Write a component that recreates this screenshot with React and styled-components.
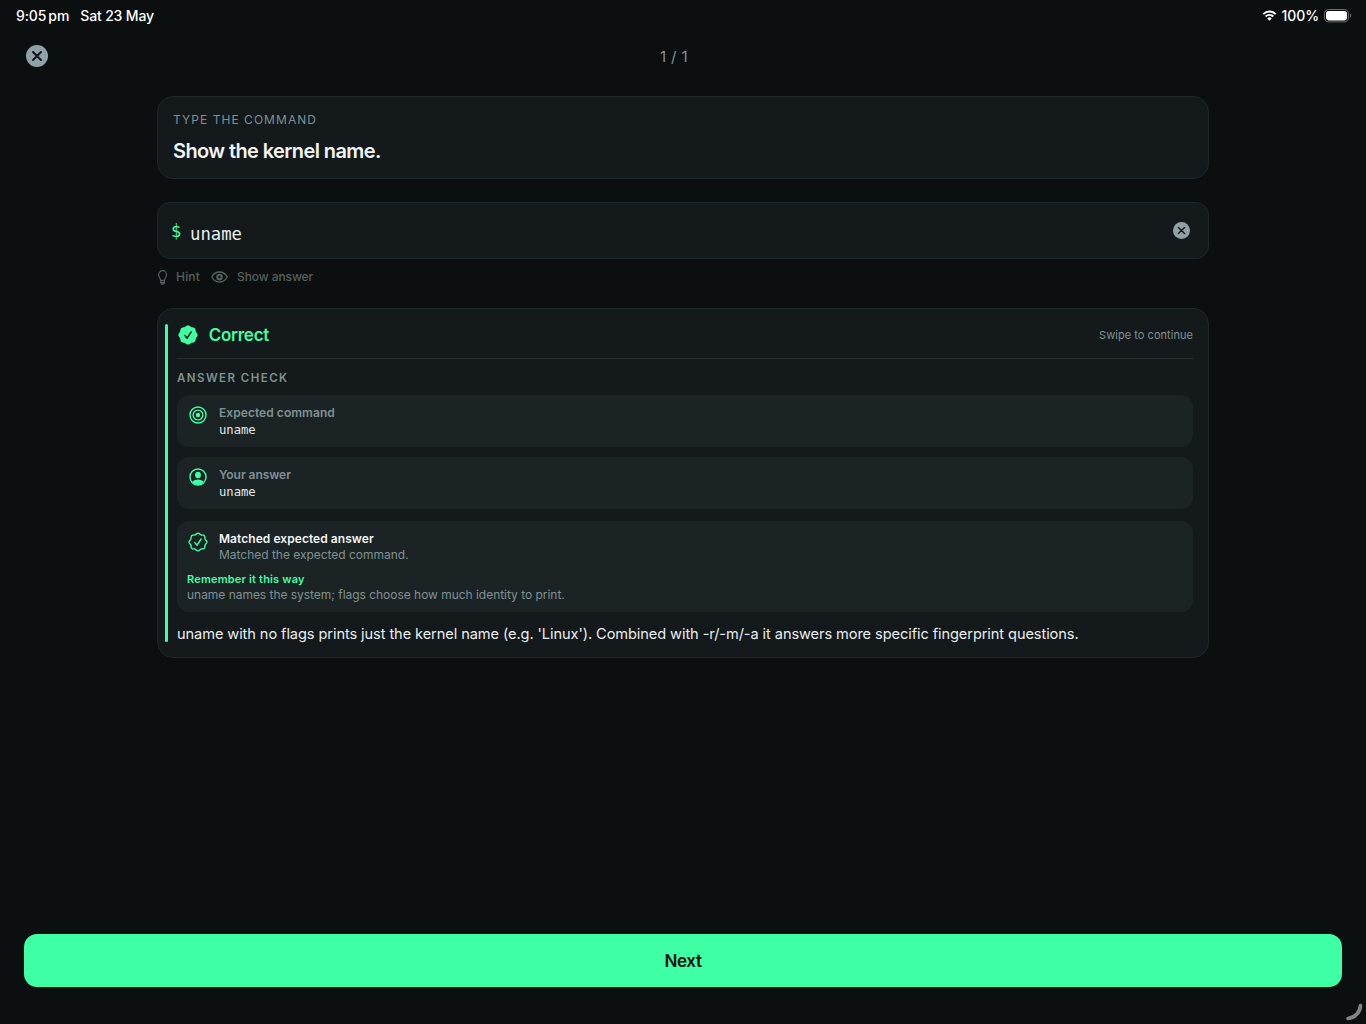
import React from 'react'
import styled, { createGlobalStyle } from 'styled-components';

const green = '#3effa3';
const muted = '#7f9292';

// wavy eight-lobed outline around 0,0
const sealPath = (radius, depth) => {
    const points = [];
    for (let i = 0; i < 128; i++) {
        const angle = (i / 128) * Math.PI * 2;
        const r = radius + depth * Math.cos(angle * 8);
        points.push(`${(r * Math.cos(angle)).toFixed(2)} ${(r * Math.sin(angle)).toFixed(2)}`);
    }
    return `M${points.join('L')}Z`;
}

function CloseIcon({ size }) {
    return (
        <svg width={size} height={size} viewBox="0 0 22 22">
            <circle cx="11" cy="11" r="11" fill="#91a2a6" />
            <path d="M7 7l8 8M15 7l-8 8" stroke="#0c1011" strokeWidth="1.9" strokeLinecap="round" />
        </svg>
    )
}

function WifiIcon() {
    return (
        <svg width="15" height="11" viewBox="0 0 16 12" fill="none" stroke="#fff" strokeWidth="2">
            <path d="M1.2 4.4a9.7 9.7 0 0 1 13.6 0" />
            <path d="M3.8 7.1a6 6 0 0 1 8.4 0" />
            <path d="M8 11.6L5.6 9.2a3.4 3.4 0 0 1 4.8 0z" fill="#fff" stroke="none" />
        </svg>
    )
}

function BatteryIcon() {
    return (
        <svg width="28" height="14" viewBox="0 0 28 14">
            <rect x="0.5" y="0.5" width="24" height="12.4" rx="4.2" fill="none" stroke="#6b6e6f" />
            <rect x="2" y="2" width="21" height="9.4" rx="2.8" fill="#fff" />
            <path d="M26 4.6c1.7.6 1.7 3.6 0 4.2z" fill="#6b6e6f" />
        </svg>
    )
}

function BulbIcon() {
    return (
        <svg width="11" height="15" viewBox="0 0 11 15" fill="none" stroke="#56605f" strokeWidth="1.2" strokeLinecap="round" strokeLinejoin="round">
            <path d="M3.7 10.4C3.6 8.4 1.7 7.2 1.7 4.6a3.9 3.9 0 0 1 7.8 0c0 2.6-1.9 3.8-2 5.8z" />
            <path d="M3.8 10.4v2.4c0 .9.7 1.400 1.800 1.400s1.800-.5 1.800-1.400v-2.400M3.900 12.300h3.400" />
        </svg>
    )
}

function EyeIcon() {
    return (
        <svg width="17" height="12" viewBox="0 0 17 12" fill="none" stroke="#56605f" strokeWidth="1.3">
            <path d="M.8 6C2.2 3.3 5 1 8.5 1S14.8 3.3 16.2 6C14.8 8.7 12 11 8.5 11S2.2 8.7.8 6z" />
            <circle cx="8.5" cy="6" r="2.3" strokeWidth="2.1" />
        </svg>
    )
}

function SealFilledIcon() {
    return (
        <svg width="20" height="20" viewBox="-10 -10 20 20">
            <path d={sealPath(9.1, 0.5)} fill={green} />
            <path d="M-3.1 .6l2.2 2.6 4-6.2" fill="none" stroke="#14191b" strokeWidth="1.5" strokeLinecap="round" strokeLinejoin="round" />
        </svg>
    )
}

function SealIcon() {
    return (
        <svg width="20" height="20" viewBox="-10 -10 20 20" fill="none" stroke={green} strokeWidth="1.4" strokeLinecap="round" strokeLinejoin="round">
            <path d={sealPath(8.3, 0.6)} />
            <path d="M-3.1 .6l2.2 2.6 4-6.2" />
        </svg>
    )
}

function TargetIcon() {
    return (
        <svg width="18" height="18" viewBox="0 0 18 18" fill="none" stroke={green} strokeWidth="1.4">
            <circle cx="9" cy="9" r="8" />
            <circle cx="9" cy="9" r="4.9" />
            <circle cx="9" cy="9" r="2.2" fill={green} stroke="none" />
        </svg>
    )
}

function PersonIcon() {
    return (
        <svg width="18" height="18" viewBox="0 0 18 18">
            <circle cx="9" cy="9" r="8" fill="none" stroke={green} strokeWidth="1.4" />
            <ellipse cx="9" cy="7" rx="2.9" ry="3.2" fill={green} />
            <path d="M3.2 14.2C4.2 12.5 6.4 11.6 9 11.6s4.8.9 5.8 2.6A8 8 0 0 1 3.2 14.2z" fill={green} />
        </svg>
    )
}

function App() {
    return (
        <Screen>
            <GlobalStyle />
            <StatusBar>
                <StatusGroup $gap="11px">
                    <Text $size={14} $weight={500} $track={-0.1}>9:05<Meridiem>pm</Meridiem></Text>
                    <Text $size={14} $weight={500} $track={-0.15}>Sat 23 May</Text>
                </StatusGroup>
                <StatusGroup $gap="5px">
                    <WifiIcon />
                    <Text $size={14} $weight={500} $track={-0.1}>100%</Text>
                    <BatteryIcon />
                </StatusGroup>
            </StatusBar>
            <Toolbar>
                <IconButton><CloseIcon size={22} /></IconButton>
                <Counter $size={15} $color={muted} $track={0.4}>1 / 1</Counter>
            </Toolbar>
            <Content>
                <Prompt>
                    <Text $size={12} $line={16} $color={muted} $track={1.05}>TYPE THE COMMAND</Text>
                    <Text as="h1" $size={20} $line={26} $weight={600} $color="#f1f5f5" $track={-0.6}>Show the kernel name.</Text>
                </Prompt>
                <CommandField>
                    <Dollar $size={17} $color={green}>$</Dollar>
                    <Command $size={17.3} $color="#e9eeee">uname</Command>
                    <IconButton><CloseIcon size={17} /></IconButton>
                </CommandField>
                <Helpers>
                    <BulbIcon />
                    <Text $size={12} $weight={500} $color="#56605f" $track={0.2}>Hint</Text>
                    <EyeIcon />
                    <Text $size={12} $weight={500} $color="#56605f" $track={-0.1}>Show answer</Text>
                </Helpers>
                <Result>
                    <Accent />
                    <ResultBody>
                        <ResultHeader>
                            <SealFilledIcon />
                            <Text as="h2" $size={17} $weight={600} $color={green} $track={-0.25}>Correct</Text>
                            <Swipe $size={11} $color={muted} $track={0.04}>Swipe to continue</Swipe>
                        </ResultHeader>
                        <SectionTitle $size={11.5} $line={15} $weight={600} $color={muted} $track={1.45}>ANSWER CHECK</SectionTitle>
                        <Row>
                            <TargetIcon />
                            <div>
                                <Text $size={12} $line={16} $weight={600} $color={muted} $track={0.05}>Expected command</Text>
                                <Mono $size={12.2} $line={19} $color="#e3e8e8">uname</Mono>
                            </div>
                        </Row>
                        <Row>
                            <PersonIcon />
                            <div>
                                <Text $size={12} $line={16} $weight={600} $color={muted} $track={-0.05}>Your answer</Text>
                                <Mono $size={12.2} $line={19} $color="#e3e8e8">uname</Mono>
                            </div>
                        </Row>
                        <Feedback>
                            <Match>
                                <SealIcon />
                                <div>
                                    <Text $size={12} $line={17} $weight={600} $color="#f1f5f5" $track={0.05}>Matched expected answer</Text>
                                    <Text $size={12} $line={16} $color={muted} $track={-0.02}>Matched the expected command.</Text>
                                </div>
                            </Match>
                            <Text $size={11} $line={16} $weight={600} $color={green} $track={0.18}>Remember it this way</Text>
                            <Text $size={12} $line={16} $color={muted} $track={-0.03}>uname names the system; flags choose how much identity to print.</Text>
                        </Feedback>
                        <Text $size={14.6} $line={20} $color="#e9eeee" $track={-0.087}>uname with no flags prints just the kernel name (e.g. 'Linux'). Combined with -r/-m/-a it answers more specific fingerprint questions.</Text>
                    </ResultBody>
                </Result>
            </Content>
            <NextButton>Next</NextButton>
            <Corner width="18" height="18" viewBox="0 0 18 18">
                <path d="M15.5 2.5C15 9.5 10 14.8 3 15.5" fill="none" stroke="#858585" strokeWidth="3.6" strokeLinecap="round" />
            </Corner>
        </Screen>
    )
}

const GlobalStyle = createGlobalStyle`
    * {
        box-sizing: border-box;
    }
    body {
        margin: 0;
        background: #0b0f10;
        font-family: Inter, "Liberation Sans", sans-serif;
    }
    svg {
        display: block;
        flex-shrink: 0;
    }
`
const Screen = styled.div`
    position: relative;
    display: flex;
    flex-direction: column;
    width: 1366px;
    height: 1024px;
    overflow: hidden;
    background: #0b0f10;
`
const Text = styled.p`
    margin: 0;
    font-size: ${({ $size }) => $size}px;
    line-height: ${({ $line }) => ($line ? `${$line}px` : '1.2')};
    font-weight: ${({ $weight }) => $weight || 400};
    letter-spacing: ${({ $track }) => $track || 0}px;
    color: ${({ $color }) => $color || '#fff'};
    white-space: nowrap;
`
const Mono = styled(Text)`
    font-family: "DejaVu Sans Mono", "Liberation Mono", monospace;
`
const StatusBar = styled.header`
    display: flex;
    justify-content: space-between;
    align-items: center;
    height: 32px;
    padding: 0 14px 0 16px;
`
const StatusGroup = styled.div`
    display: flex;
    align-items: center;
    gap: ${({ $gap }) => $gap};
`
const Meridiem = styled.span`
    margin-left: 2px;
`
const Toolbar = styled.nav`
    display: grid;
    grid-template-columns: 40px 1fr 58px;
    align-items: center;
    justify-items: center;
    height: 48px;
    padding: 0 17px;
`
const Counter = styled(Text)`
    padding-top: 2px;
`
const IconButton = styled.button`
    padding: 0;
    border: 0;
    background: none;
`
const Content = styled.main`
    display: flex;
    flex-direction: column;
    width: 1052px;
    margin: 16px auto 0;
`
const Panel = styled.section`
    background: #14191b;
    border: 1px solid #1c282a;
    border-radius: 16px;
`
const Prompt = styled(Panel)`
    display: flex;
    flex-direction: column;
    gap: 10px;
    height: 83px;
    padding: 15px 15px 14px;
`
const CommandField = styled(Panel)`
    display: flex;
    align-items: center;
    height: 57px;
    margin-top: 23px;
    padding: 0 18.5px 0 13px;
    border-radius: 13px;

    button {
        margin-left: auto;
    }
`
const Dollar = styled(Mono)`
    width: 19px;
    padding-top: 2px;
`
const Command = styled(Mono)`
    padding-top: 8px;
`
const Helpers = styled.div`
    display: flex;
    align-items: center;
    height: 16px;
    margin-top: 10px;

    p {
        margin: 0 11px 0 8px;
    }
    svg + p:last-child {
        margin-left: 9px;
    }
`
const Result = styled(Panel)`
    display: flex;
    gap: 9px;
    height: 350px;
    margin-top: 23px;
    padding: 15px 15px 15px 7px;
`
const Accent = styled.div`
    width: 3px;
    border-radius: 2px;
    background: ${green};
`
const ResultBody = styled.div`
    flex: 1;
`
const ResultHeader = styled.div`
    display: flex;
    align-items: center;
    gap: 11px;
    height: 35px;
    padding: 0 0 12px 0.7px;
    border-bottom: 1px solid #283032;
`
const Swipe = styled(Text)`
    margin-left: auto;
    padding-top: 1px;
`
const SectionTitle = styled(Text)`
    margin: 12px 0 9px;
`
const Row = styled.div`
    display: flex;
    gap: 12px;
    height: 52px;
    margin-bottom: 10px;
    padding: 10px 12px 8px;
    border-radius: 12px;
    background: #1c2325;

    svg {
        margin-top: 0.5px;
    }
`
const Feedback = styled.div`
    height: 91px;
    margin: 12px 0;
    padding: 9px 10px;
    border-radius: 12px;
    background: #1c2325;
`
const Match = styled.div`
    display: flex;
    gap: 11px;
    margin: 0 0 8px 1px;

    svg {
        margin-top: 2px;
    }
`
const NextButton = styled.button`
    height: 53px;
    margin: auto 24px 37px;
    border: 0;
    border-radius: 13px;
    background: ${green};
    color: #0b0f10;
    font: 600 17px Inter, "Liberation Sans", sans-serif;
    letter-spacing: -0.35px;
`
const Corner = styled.svg`
    position: absolute;
    right: 3px;
    bottom: 3px;
`

export default App
